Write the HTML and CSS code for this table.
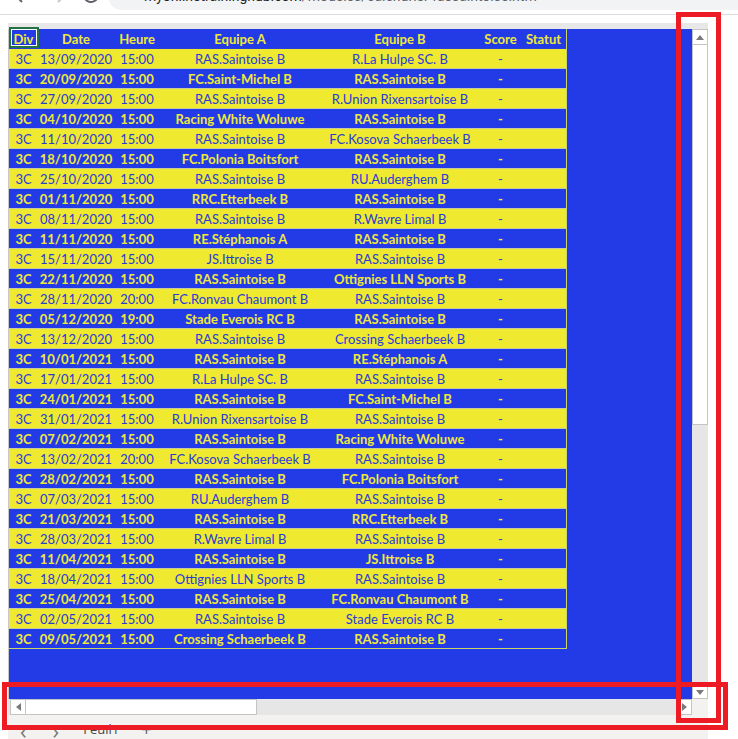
FILE: index.html
```html
<!DOCTYPE html>
<html lang="fr">
<head>
<meta charset="utf-8">
<title>Calendrier RAS.Saintoise B</title>
<link rel="stylesheet" href="styles.css">
</head>
<body>
<div class="chrome">
  <div class="nav">
    <svg class="ic" width="24" height="24" viewBox="0 0 24 24"><path d="M20 12H5M11 5l-7 7 7 7" fill="none" stroke="#5f6368" stroke-width="2"/></svg>
    <svg class="ic" width="24" height="24" viewBox="0 0 24 24"><path d="M4 12h15M13 5l7 7-7 7" fill="none" stroke="#c4c7c9" stroke-width="2"/></svg>
    <svg class="ic" width="24" height="24" viewBox="0 0 24 24"><path d="M19 12a7 7 0 1 1-2.05-4.95" fill="none" stroke="#5f6368" stroke-width="2"/><path d="M19 4v5h-5" fill="none" stroke="#5f6368" stroke-width="2"/></svg>
  </div>
  <div class="url">
    <svg class="tune" width="14" height="14" viewBox="0 0 14 14"><path d="M1 4h12M1 10h12" stroke="#5f6368" stroke-width="1.6"/></svg>
    <span class="dom">myonlinetraininghub.com</span><span class="path">/modeles/calendrier-rassaintoise.htm</span>
  </div>
</div>

<div class="excel">
  <div class="topband"></div>
  <div class="main">
    <div class="sheet">
      <div class="table">
        <div class="row head">
          <div class="c first">Div<span class="sel"></span></div><div class="c">Date</div><div class="c">Heure</div><div class="c">Equipe A</div><div class="c">Equipe B</div><div class="c">Score</div><div class="c">Statut</div>
        </div>
        <div class="row y"><div class="c">3C</div><div class="c">13/09/2020</div><div class="c">15:00</div><div class="c">RAS.Saintoise B</div><div class="c">R.La Hulpe SC. B</div><div class="c">-</div><div class="c"></div></div>
        <div class="row b"><div class="c">3C</div><div class="c">20/09/2020</div><div class="c">15:00</div><div class="c">FC.Saint-Michel B</div><div class="c">RAS.Saintoise B</div><div class="c">-</div><div class="c"></div></div>
        <div class="row y"><div class="c">3C</div><div class="c">27/09/2020</div><div class="c">15:00</div><div class="c">RAS.Saintoise B</div><div class="c">R.Union Rixensartoise B</div><div class="c">-</div><div class="c"></div></div>
        <div class="row b"><div class="c">3C</div><div class="c">04/10/2020</div><div class="c">15:00</div><div class="c">Racing White Woluwe</div><div class="c">RAS.Saintoise B</div><div class="c">-</div><div class="c"></div></div>
        <div class="row y"><div class="c">3C</div><div class="c">11/10/2020</div><div class="c">15:00</div><div class="c">RAS.Saintoise B</div><div class="c">FC.Kosova Schaerbeek B</div><div class="c">-</div><div class="c"></div></div>
        <div class="row b"><div class="c">3C</div><div class="c">18/10/2020</div><div class="c">15:00</div><div class="c">FC.Polonia Boitsfort</div><div class="c">RAS.Saintoise B</div><div class="c">-</div><div class="c"></div></div>
        <div class="row y"><div class="c">3C</div><div class="c">25/10/2020</div><div class="c">15:00</div><div class="c">RAS.Saintoise B</div><div class="c">RU.Auderghem B</div><div class="c">-</div><div class="c"></div></div>
        <div class="row b"><div class="c">3C</div><div class="c">01/11/2020</div><div class="c">15:00</div><div class="c">RRC.Etterbeek B</div><div class="c">RAS.Saintoise B</div><div class="c">-</div><div class="c"></div></div>
        <div class="row y"><div class="c">3C</div><div class="c">08/11/2020</div><div class="c">15:00</div><div class="c">RAS.Saintoise B</div><div class="c">R.Wavre Limal B</div><div class="c">-</div><div class="c"></div></div>
        <div class="row b"><div class="c">3C</div><div class="c">11/11/2020</div><div class="c">15:00</div><div class="c">RE.Stéphanois A</div><div class="c">RAS.Saintoise B</div><div class="c">-</div><div class="c"></div></div>
        <div class="row y"><div class="c">3C</div><div class="c">15/11/2020</div><div class="c">15:00</div><div class="c">JS.Ittroise B</div><div class="c">RAS.Saintoise B</div><div class="c">-</div><div class="c"></div></div>
        <div class="row b"><div class="c">3C</div><div class="c">22/11/2020</div><div class="c">15:00</div><div class="c">RAS.Saintoise B</div><div class="c">Ottignies LLN Sports B</div><div class="c">-</div><div class="c"></div></div>
        <div class="row y"><div class="c">3C</div><div class="c">28/11/2020</div><div class="c">20:00</div><div class="c">FC.Ronvau Chaumont B</div><div class="c">RAS.Saintoise B</div><div class="c">-</div><div class="c"></div></div>
        <div class="row b"><div class="c">3C</div><div class="c">05/12/2020</div><div class="c">19:00</div><div class="c">Stade Everois RC B</div><div class="c">RAS.Saintoise B</div><div class="c">-</div><div class="c"></div></div>
        <div class="row y"><div class="c">3C</div><div class="c">13/12/2020</div><div class="c">15:00</div><div class="c">RAS.Saintoise B</div><div class="c">Crossing Schaerbeek B</div><div class="c">-</div><div class="c"></div></div>
        <div class="row b"><div class="c">3C</div><div class="c">10/01/2021</div><div class="c">15:00</div><div class="c">RAS.Saintoise B</div><div class="c">RE.Stéphanois A</div><div class="c">-</div><div class="c"></div></div>
        <div class="row y"><div class="c">3C</div><div class="c">17/01/2021</div><div class="c">15:00</div><div class="c">R.La Hulpe SC. B</div><div class="c">RAS.Saintoise B</div><div class="c">-</div><div class="c"></div></div>
        <div class="row b"><div class="c">3C</div><div class="c">24/01/2021</div><div class="c">15:00</div><div class="c">RAS.Saintoise B</div><div class="c">FC.Saint-Michel B</div><div class="c">-</div><div class="c"></div></div>
        <div class="row y"><div class="c">3C</div><div class="c">31/01/2021</div><div class="c">15:00</div><div class="c">R.Union Rixensartoise B</div><div class="c">RAS.Saintoise B</div><div class="c">-</div><div class="c"></div></div>
        <div class="row b"><div class="c">3C</div><div class="c">07/02/2021</div><div class="c">15:00</div><div class="c">RAS.Saintoise B</div><div class="c">Racing White Woluwe</div><div class="c">-</div><div class="c"></div></div>
        <div class="row y"><div class="c">3C</div><div class="c">13/02/2021</div><div class="c">20:00</div><div class="c">FC.Kosova Schaerbeek B</div><div class="c">RAS.Saintoise B</div><div class="c">-</div><div class="c"></div></div>
        <div class="row b"><div class="c">3C</div><div class="c">28/02/2021</div><div class="c">15:00</div><div class="c">RAS.Saintoise B</div><div class="c">FC.Polonia Boitsfort</div><div class="c">-</div><div class="c"></div></div>
        <div class="row y"><div class="c">3C</div><div class="c">07/03/2021</div><div class="c">15:00</div><div class="c">RU.Auderghem B</div><div class="c">RAS.Saintoise B</div><div class="c">-</div><div class="c"></div></div>
        <div class="row b"><div class="c">3C</div><div class="c">21/03/2021</div><div class="c">15:00</div><div class="c">RAS.Saintoise B</div><div class="c">RRC.Etterbeek B</div><div class="c">-</div><div class="c"></div></div>
        <div class="row y"><div class="c">3C</div><div class="c">28/03/2021</div><div class="c">15:00</div><div class="c">R.Wavre Limal B</div><div class="c">RAS.Saintoise B</div><div class="c">-</div><div class="c"></div></div>
        <div class="row b"><div class="c">3C</div><div class="c">11/04/2021</div><div class="c">15:00</div><div class="c">RAS.Saintoise B</div><div class="c">JS.Ittroise B</div><div class="c">-</div><div class="c"></div></div>
        <div class="row y"><div class="c">3C</div><div class="c">18/04/2021</div><div class="c">15:00</div><div class="c">Ottignies LLN Sports B</div><div class="c">RAS.Saintoise B</div><div class="c">-</div><div class="c"></div></div>
        <div class="row b"><div class="c">3C</div><div class="c">25/04/2021</div><div class="c">15:00</div><div class="c">RAS.Saintoise B</div><div class="c">FC.Ronvau Chaumont B</div><div class="c">-</div><div class="c"></div></div>
        <div class="row y"><div class="c">3C</div><div class="c">02/05/2021</div><div class="c">15:00</div><div class="c">RAS.Saintoise B</div><div class="c">Stade Everois RC B</div><div class="c">-</div><div class="c"></div></div>
        <div class="row b last"><div class="c">3C</div><div class="c">09/05/2021</div><div class="c">15:00</div><div class="c">Crossing Schaerbeek B</div><div class="c">RAS.Saintoise B</div><div class="c">-</div><div class="c"></div></div>
      </div>
    </div>
    <div class="vscroll">
      <div class="sbtn up"><span class="tri tri-up"></span></div>
      <div class="vthumb"></div>
      <div class="vtrack"></div>
      <div class="sbtn down"><span class="tri tri-down"></span></div>
    </div>
  </div>
  <div class="hbar">
    <div class="sbtn left"><span class="tri tri-left"></span></div>
    <div class="hthumb"></div>
    <div class="htrack"></div>
    <div class="sbtn right"><span class="tri tri-right"></span></div>
    <div class="corner"></div>
  </div>
  <div class="tabs">
    <span class="chev">&lsaquo;</span>
    <span class="chev">&rsaquo;</span>
    <span class="tab">Feuil1</span>
    <span class="plus">+</span>
  </div>
</div>

<div class="mark mark-v"></div>
<div class="mark mark-h"></div>
</body>
</html>
```

FILE: styles.css
```css
* { box-sizing: border-box; margin: 0; padding: 0; }
html, body { width: 738px; height: 739px; overflow: hidden; background: #fff; }
body { position: relative; font-family: Lato, "Liberation Sans", sans-serif; }

/* browser chrome (cut off at the top) */
.chrome {
  height: 15px;
  border-bottom: 1px solid #dadce0;
  display: flex;
  overflow: hidden;
  background: #fff;
}
.nav {
  width: 108px;
  display: flex;
  gap: 10px;
  padding-left: 11px;
  margin-top: -17px;
  height: 24px;
}
.nav .ic { flex: none; }
.url {
  flex: 1;
  height: 28px;
  margin-top: -18px;
  background: #f1f3f4;
  border-radius: 14px 0 0 14px;
  display: flex;
  align-items: center;
  padding-left: 12px;
  font-family: Roboto, "Liberation Sans", sans-serif;
  font-size: 14px;
  white-space: nowrap;
}
.tune { margin-right: 10px; flex: none; }
.dom { color: #202124; }
.path { color: #5f6368; }

/* excel frame */
.excel {
  margin: 8px 0 0 8px;
  width: 700px;
  height: 716px;
  display: flex;
  flex-direction: column;
}
.topband { height: 6px; background: #e8e8e8; }
.main { height: 670px; display: flex; }
.sheet {
  width: 684px;
  background: #233be6;
  border-left: 1px solid #c9c9c9;
}

.table {
  width: 558px;
  border-right: 1px solid #c9d468;
}
.row {
  display: grid;
  grid-template-columns: 29px 76px 46px 160px 160px 41px 45px;
  height: 20px;
  border-bottom: 1px solid #c6cb9e;
  font-size: 13px;
  line-height: 20px;
  text-align: center;
  white-space: nowrap;
}
.c { overflow: visible; }
.head { background: #233be6; color: #efe93a; font-weight: 700; border-bottom-color: #2a3fd8; }
.first { position: relative; }
.sel {
  position: absolute;
  top: -2px;
  left: 0;
  width: 30px;
  height: 21px;
  border: 2px solid #217346;
  box-shadow: inset 0 0 0 1px #fff;
}
.y { background: #efe930; color: #2a3bd6; font-weight: 400; }
.b { background: #233be6; color: #efe93a; font-weight: 700; }
.last { border-bottom-color: #c9d468; }

/* scrollbars */
.vscroll {
  width: 16px;
  display: flex;
  flex-direction: column;
  background: #e6e6e6;
}
.sbtn {
  background: #fff;
  border: 1px solid #c4c4c4;
  display: flex;
  align-items: center;
  justify-content: center;
}
.up { height: 16px; }
.down { height: 14px; }
.vthumb { height: 380px; background: #fff; border: 1px solid #c4c4c4; border-top: 0; }
.vtrack { flex: 1; }

.tri { width: 0; height: 0; border-style: solid; }
.tri-up { border-width: 0 4px 5px 4px; border-color: transparent transparent #7a7a7a transparent; }
.tri-down { border-width: 5px 4px 0 4px; border-color: #7a7a7a transparent transparent transparent; }
.tri-left { border-width: 4px 5px 4px 0; border-color: transparent #7a7a7a transparent transparent; }
.tri-right { border-width: 4px 0 4px 5px; border-color: transparent transparent transparent #7a7a7a; }

.hbar {
  height: 16px;
  display: flex;
  background: #e6e6e6;
  padding-left: 2px;
}
.left { width: 16px; }
.hthumb { width: 231px; background: #fff; border: 1px solid #c4c4c4; border-left: 0; }
.htrack { flex: 1; }
.right { width: 15px; }
.corner { width: 16px; background: #f3f2f1; }

.tabs {
  height: 24px;
  background: #f3f2f1;
  display: flex;
  align-items: center;
  padding-top: 3px;
  font-family: "Open Sans", "Liberation Sans", sans-serif;
  color: #444;
  font-size: 13px;
}
.chev { font-size: 22px; color: #777; line-height: 1; padding-top: 3px; }
.chev:first-child { margin-left: 12px; }
.chev + .chev { margin-left: 26px; }
.tab { margin-left: 24px; }
.plus { margin-left: 22px; font-size: 18px; color: #666; line-height: 1; }

/* red annotation rectangles overlaying the screenshot */
.mark { position: absolute; border: 5px solid #ed1c24; }
.mark-v { left: 676px; top: 12px; width: 45px; height: 711px; }
.mark-h { left: 2px; top: 682px; width: 726px; height: 48px; }
```
